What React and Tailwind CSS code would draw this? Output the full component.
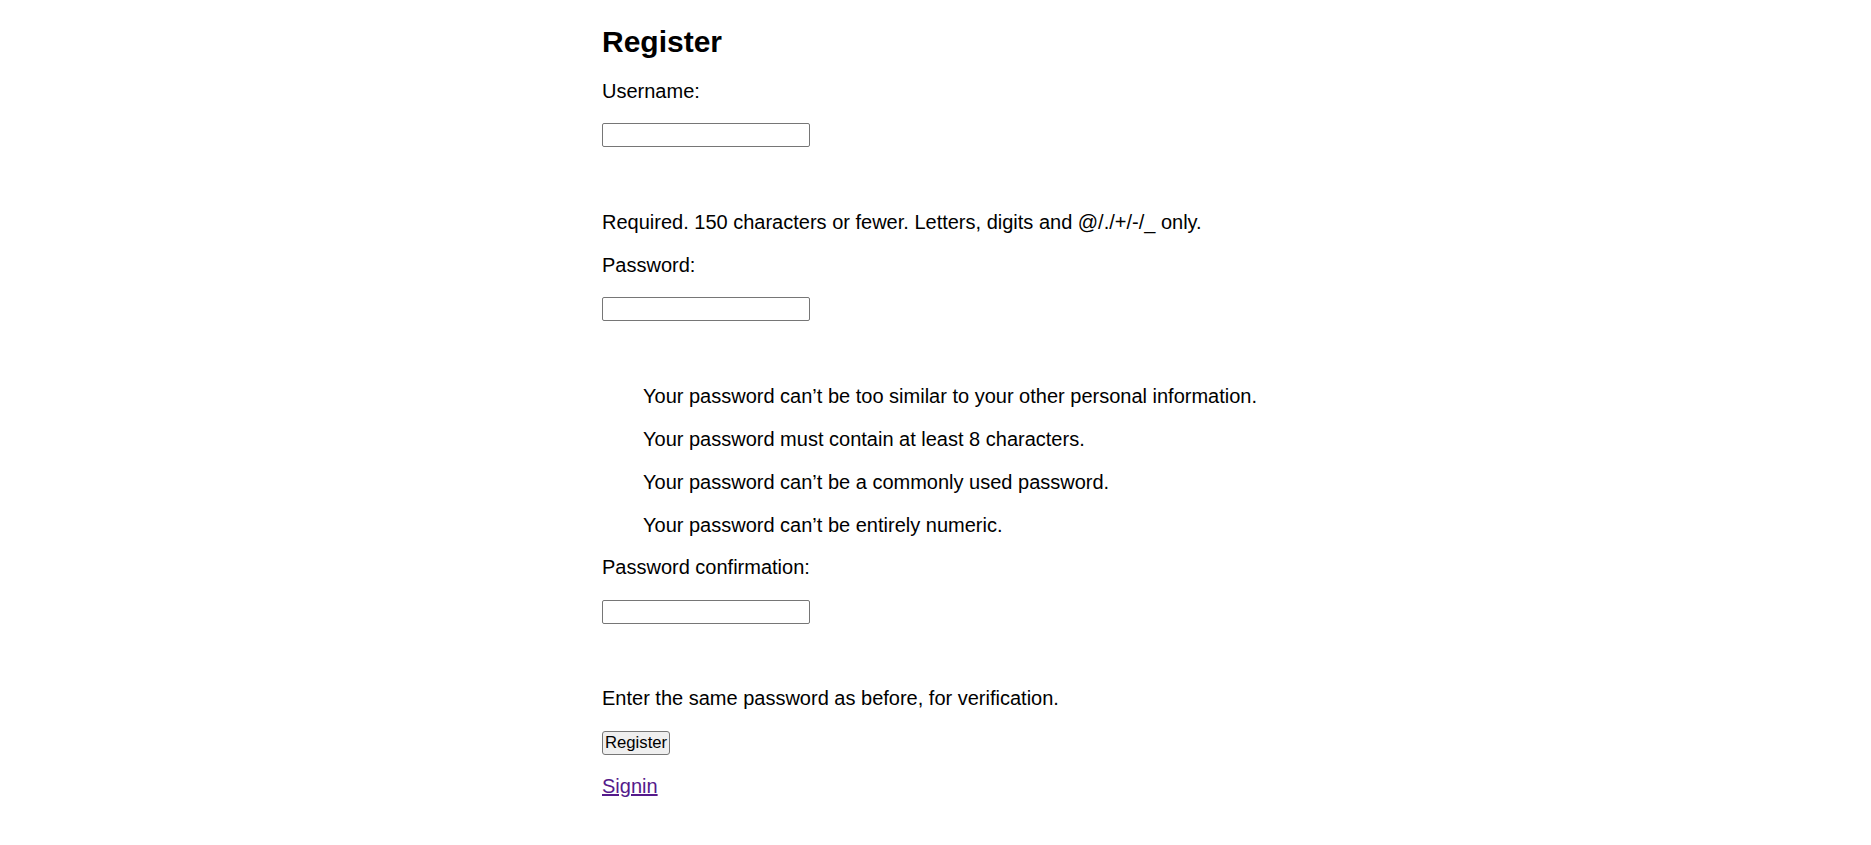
export default function App() {
    const rules = [
        'Your password can’t be too similar to your other personal information.',
        'Your password must contain at least 8 characters.',
        'Your password can’t be a commonly used password.',
        'Your password can’t be entirely numeric.',
    ];

    const inputCls = 'block h-[24px] w-[208px] rounded-[2px] border border-[#767676] bg-white px-[2px] text-[16.7px] outline-none';

    return (
        <div className="min-h-screen bg-white font-['Liberation_Sans',Arial,sans-serif] text-black">
            <div className="mx-auto w-[667px] pt-[25px]">
                <h2 className="text-[30px] font-bold leading-[34.5px]">Register</h2>

                <form className="text-[20px] leading-[23px]" onSubmit={e => e.preventDefault()}>
                    <p className="mt-[20px]">Username:</p>
                    <input type="text" className={`mt-[20.5px] ${inputCls}`} />
                    <p className="mt-[63.5px]">Required. 150 characters or fewer. Letters, digits and @/./+/-/_ only.</p>

                    <p className="mt-[20px]">Password:</p>
                    <input type="password" className={`mt-[20.5px] ${inputCls}`} />
                    <ul className="mt-[63.5px] list-none pl-[41px]">
                        {rules.map((r, i) => (
                            <li key={i} className={i !== 0 ? 'mt-[20px]' : ''}>{r}</li>
                        ))}
                    </ul>

                    <p className="mt-[19.5px]">Password confirmation:</p>
                    <input type="password" className={`mt-[20.5px] ${inputCls}`} />
                    <p className="mt-[63px]">Enter the same password as before, for verification.</p>

                    <button type="submit" className="mt-[21px] block h-[24px] rounded-[3px] border border-[#767676] bg-[#efefef] px-[2px] text-[16.7px] leading-[20px]">
                        Register
                    </button>
                    <p className="mt-[20px]">
                        <a href="#" className="text-[#551a8b] underline">Signin</a>
                    </p>
                </form>
            </div>
        </div>
    );
}
